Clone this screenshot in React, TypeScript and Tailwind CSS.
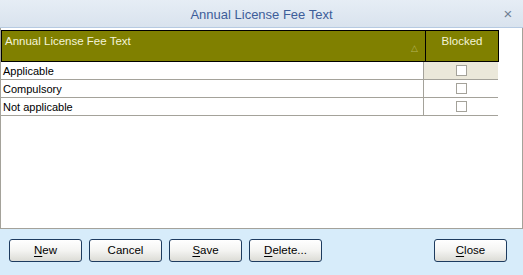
import React from "react";

type Row = { text: string; blocked: boolean };

const rows: Row[] = [
  { text: "Applicable", blocked: false },
  { text: "Compulsory", blocked: false },
  { text: "Not applicable", blocked: false },
];

function Mnemonic({ label, index }: { label: string; index: number }) {
  if (index < 0) return <>{label}</>;
  return (
    <>
      {label.slice(0, index)}
      <span className="underline underline-offset-2">{label[index]}</span>
      {label.slice(index + 1)}
    </>
  );
}

function Button({ label, index, className }: { label: string; index: number; className?: string }) {
  return (
    <button
      className={
        "w-[73px] h-[23px] rounded-[3px] border border-[#1d3b5f] bg-gradient-to-b from-[#ffffff] via-[#f4f4f2] to-[#dcdcd6] text-[11.5px] text-black leading-none " +
        (className ?? "")
      }
    >
      <Mnemonic label={label} index={index} />
    </button>
  );
}

export default function App() {
  return (
    <div
      className="w-[523px] h-[275px] flex flex-col bg-[#d7ecfa] overflow-hidden"
      style={{ fontFamily: '"Liberation Sans", Arial, sans-serif' }}
    >
      {/* title bar */}
      <div className="h-[28px] flex items-center bg-gradient-to-b from-[#e6edf5] to-[#d9e3ee] border-b border-[#b6cae2]">
        <div className="w-[30px]" />
        <div className="flex-1 text-center text-[13px] text-[#3d5d99] pt-[2px]">Annual License Fee Text</div>
        <div className="w-[30px] flex justify-center text-[15px] text-[#6f7f94] leading-none pb-[1px]">×</div>
      </div>

      {/* grid */}
      <div className="h-[201px] bg-white border-l border-r border-b border-[#a4a29a] pt-[2px]">
        <div className="flex w-[498px] h-[32px] border border-black bg-[#808000] text-[11.5px] text-[#f4f4d8]">
          <div className="w-[424px] h-full border-r border-black flex justify-between pl-[3px] pr-[7px] pt-[2px]">
            <span>Annual License Fee Text</span>
            <span className="text-[9px] text-[#b4b45a] pt-[9px]">△</span>
          </div>
          <div className="flex-1 text-center pt-[2px]">Blocked</div>
        </div>
        {rows.map((r, i) => (
          <div key={r.text} className="flex w-[497px] h-[18px] border-b border-[#a4a29a] text-[11px] text-black">
            <div className="w-[423px] border-r border-[#a4a29a] pl-[2px] leading-[18px]">{r.text}</div>
            <div className={"flex-1 flex items-center justify-center " + (i === 0 ? "bg-[#ebe8da]" : "bg-white")}>
              <div className="w-[11px] h-[11px] border border-[#a4a29a] bg-white" />
            </div>
          </div>
        ))}
      </div>

      {/* buttons */}
      <div className="flex items-start pt-[10px] pl-[9px] pr-[16px]">
        <div className="flex gap-[7px]">
          <Button label="New" index={0} />
          <Button label="Cancel" index={-1} />
          <Button label="Save" index={0} />
          <Button label="Delete..." index={0} />
        </div>
        <div className="flex-1" />
        <Button label="Close" index={0} />
      </div>
    </div>
  );
}
